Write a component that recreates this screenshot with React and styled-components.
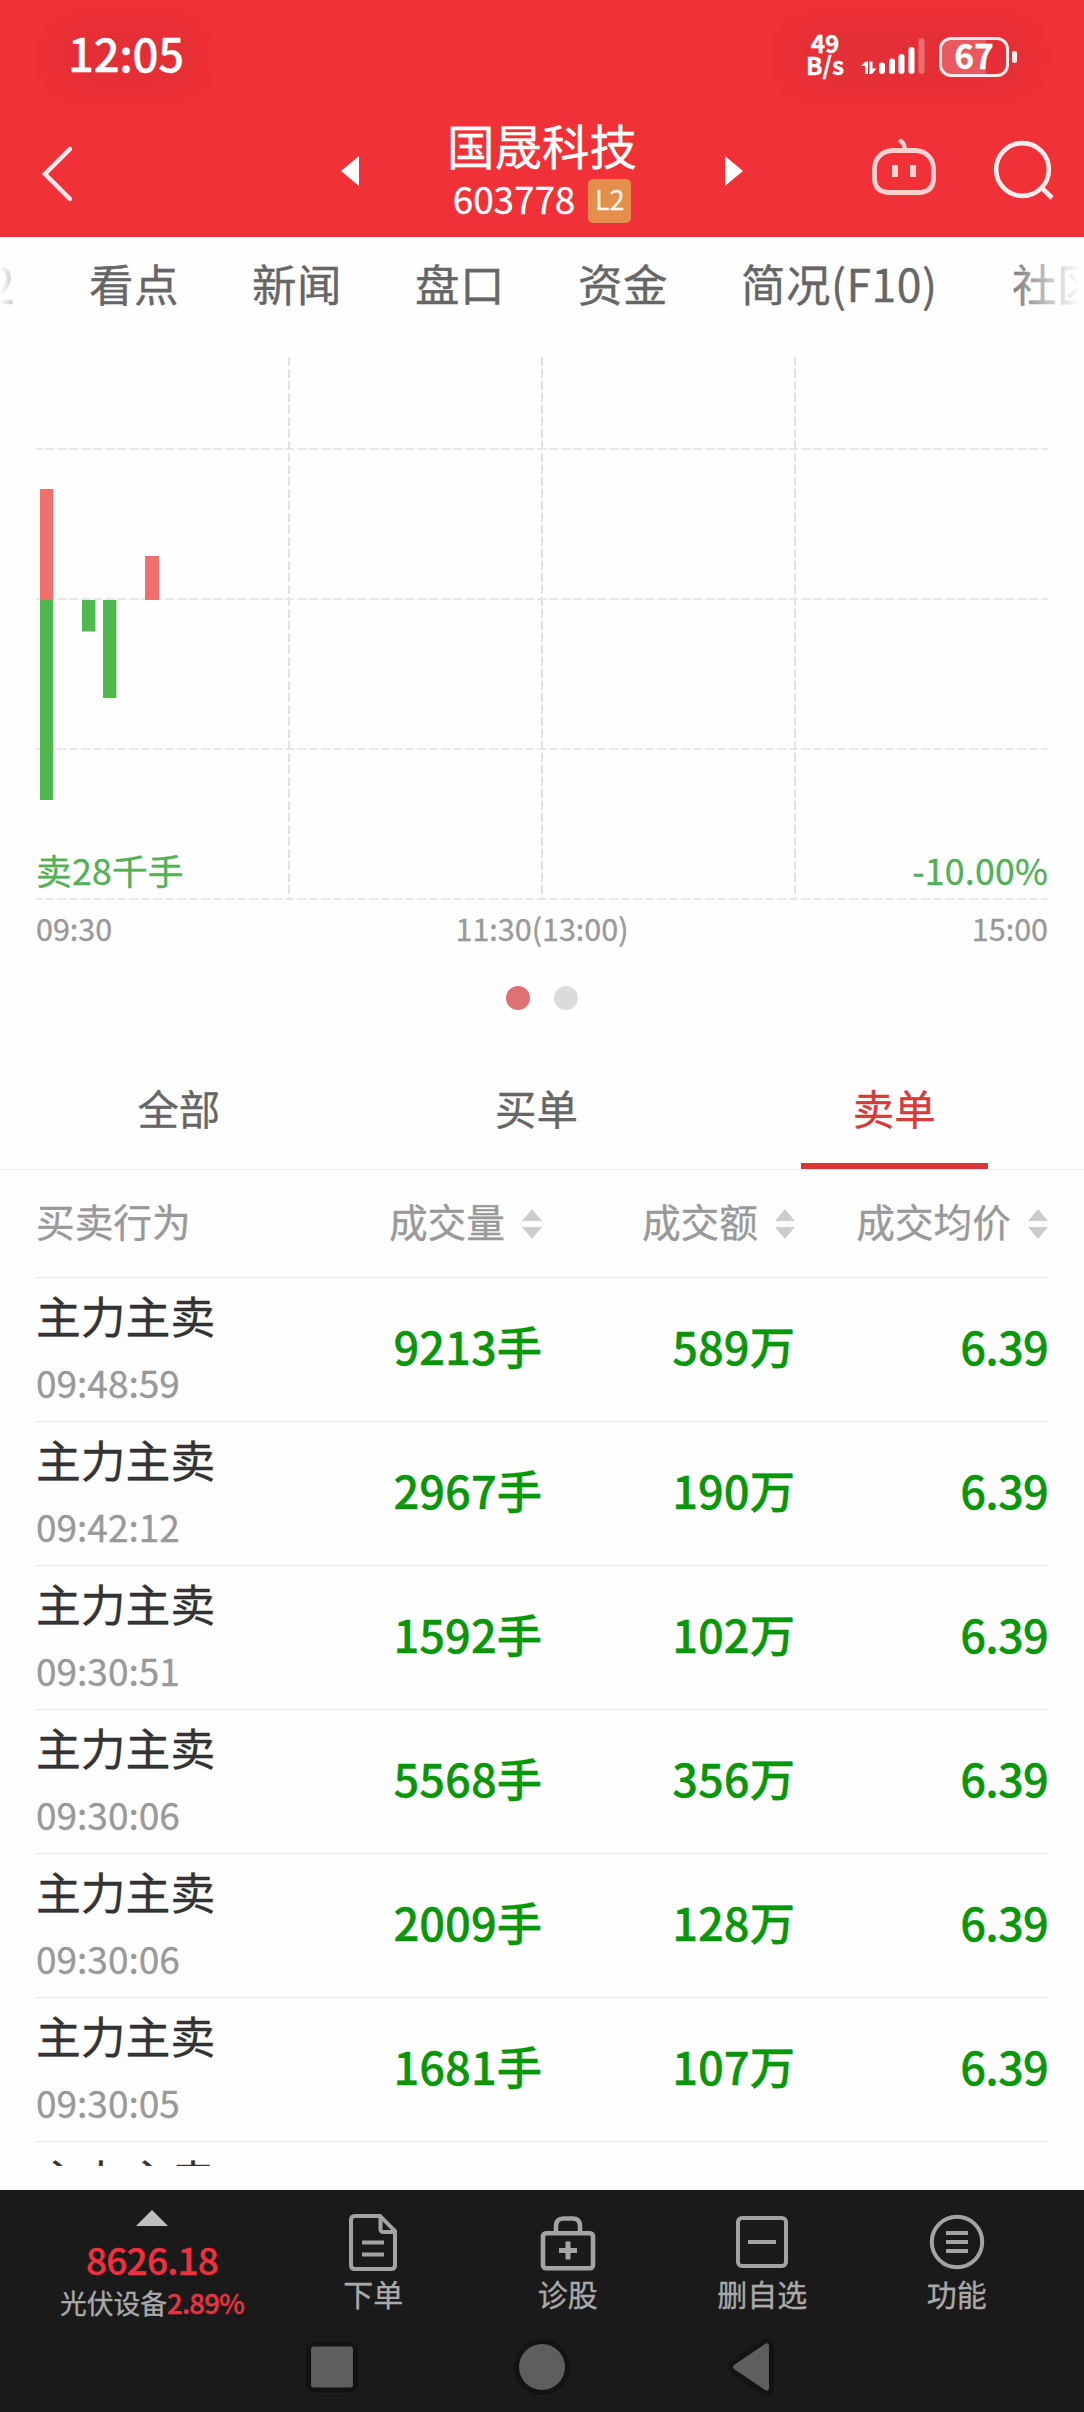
import React, { useState } from 'react';
import styled, { createGlobalStyle } from 'styled-components';

const GlobalStyle = createGlobalStyle`
  * {
    box-sizing: border-box;
  }
  body {
    margin: 0;
    background: #fff;
    font-family: 'Noto Sans CJK SC', 'Noto Sans', sans-serif;
    -webkit-text-stroke: 0.35px currentColor;
  }
`;

// Styled Components
const Page = styled.div`
  width: 1084px;
  height: 2412px;
  display: flex;
  flex-direction: column;
  overflow: hidden;
  background: #fefefe;
`;

const Header = styled.header`
  height: 237px;
  background: #f03137;
  color: #fff;
`;

const StatusBar = styled.div`
  height: 112px;
  display: flex;
  justify-content: space-between;
  padding: 36px 67px 0 68px;
`;

const Halo = styled.div`
  height: 42px;
  display: flex;
  align-items: center;
  border-radius: 20px;
  background: rgba(70, 35, 40, 0.07);
  box-shadow: 0 0 30px 14px rgba(70, 35, 40, 0.07);
`;

const Clock = styled.div`
  font-size: 45.5px;
  line-height: 33px;
  font-weight: 500;
  letter-spacing: -0.3px;
  padding-bottom: 9px;
`;

const NetSpeed = styled.div`
  width: 44px;
  margin-right: 14px;
  padding-bottom: 6px;
  text-align: center;
  font-size: 24.3px;
  line-height: 22px;
  font-weight: 700;
`;

const Battery = styled.div`
  width: 70px;
  height: 40px;
  margin-left: 14px;
  border: 3.5px solid #ffe9ea;
  border-radius: 12px;
  background: linear-gradient(90deg, #e9595e 0 44px, transparent 44px);
  font-size: 33.5px;
  line-height: 30px;
  font-weight: 700;
  text-align: center;
`;

const BatteryTip = styled.div`
  width: 5px;
  height: 12px;
  margin-left: 3px;
  border-radius: 2px;
  background: #ffe9ea;
`;

const NavBar = styled.div`
  display: flex;
  height: 125px;
  padding: 0 28px 0 40px;
`;

const BackIcon = styled.svg`
  width: 36px;
  height: 62px;
  margin-top: 31px;
`;

const TitleGroup = styled.div`
  display: flex;
  width: 402px;
  margin-left: 265px;
  justify-content: space-between;
`;

const ArrowIcon = styled.svg`
  width: 18px;
  height: 30px;
  margin-top: 44px;
`;

const TitleBlock = styled.div`
  display: flex;
  flex-direction: column;
  align-items: center;
`;

const StockName = styled.div`
  font-size: 47.5px;
  line-height: 66px;
  height: 62px;
`;

const StockCode = styled.div`
  display: flex;
  font-size: 36.8px;
  line-height: 48px;
`;

const LevelBadge = styled.span`
  width: 43px;
  height: 44px;
  margin: 5px 0 0 13px;
  border-radius: 5px;
  background: #e38e4a;
  color: #fff3e8;
  font-size: 27px;
  line-height: 40px;
  text-align: center;
`;

const HeaderIcons = styled.div`
  display: flex;
  gap: 53px;
  margin: 24px 0 0 127px;
`;

const TabStrip = styled.nav`
  position: relative;
  display: flex;
  gap: 74px;
  height: 92px;
  font-size: 44.5px;
  line-height: 92px;
  letter-spacing: 0.5px;
  color: #666;
  white-space: nowrap;
  overflow: hidden;

  &::after {
    content: '';
    position: absolute;
    inset: 0;
    background: linear-gradient(90deg, #fefefe 0, rgba(254, 254, 254, 0.6) 16px, transparent 60px, transparent 1000px, #fefefe 1080px);
  }
`;

const TopTab = styled.span`
  flex: none;
  width: ${props => props.$width || 89}px;
`;

const PartialTab = styled(TopTab)`
  width: 15px;
  font-size: 49px;
  letter-spacing: 0;
  direction: rtl;
`;

const ChartSection = styled.section`
  padding: 28px 36px 0;
`;

const Chart = styled.div`
  position: relative;
  height: 544px;
`;

const ChartSvg = styled.svg`
  display: block;
`;

const ChartLabel = styled.div`
  position: absolute;
  bottom: 0;
  ${props => props.$side}: 0;
  font-size: 35.7px;
  line-height: 62px;
  letter-spacing: 0.2px;
  color: #52b055;
`;

const Axis = styled.div`
  display: grid;
  grid-template-columns: 1fr auto 1fr;
  font-size: 30.5px;
  line-height: 54px;
  height: 53px;
  color: #999;

  span:last-child {
    text-align: right;
  }
`;

const Dots = styled.div`
  display: flex;
  justify-content: center;
  gap: 24px;
  margin-top: 32px;
`;

const Dot = styled.span`
  width: 24px;
  height: 24px;
  border-radius: 50%;
  background: ${props => (props.$active ? '#df7175' : '#dbdbdb')};
`;

const OrderTabs = styled.div`
  display: flex;
  flex: none;
  height: 122px;
  margin-top: 38px;
  padding-right: 11px;
  border-bottom: 1px solid #ebebeb;
`;

const OrderTab = styled.div`
  flex: 1;
  display: flex;
  flex-direction: column;
  align-items: center;
  justify-content: space-between;
  font-size: 41.4px;
  line-height: 115px;
  padding-top: 2px;
  color: ${props => (props.$active ? '#d83a3a' : '#666')};
  cursor: pointer;

  &::after {
    content: '';
    width: 187px;
    height: 6px;
    margin-top: -2px;
    background: ${props => (props.$active ? '#d93638' : 'transparent')};
  }
`;

const Table = styled.div`
  height: 996px;
  padding: 0 36px;
  overflow: hidden;
`;

const Row = styled.div`
  display: grid;
  grid-template-columns: repeat(4, 253px);
  height: 144px;
  border-bottom: 1px solid #ebebeb;
`;

const HeadRow = styled(Row)`
  height: 108px;
  font-size: 38.7px;
  line-height: 101px;
  color: #999;
`;

const HeadCell = styled.div`
  display: flex;
  justify-content: flex-end;
  white-space: nowrap;

  &:first-child {
    justify-content: flex-start;
  }
`;

const SortIcon = styled.svg`
  width: 20px;
  height: 30px;
  margin: 39px 0 0 17px;
  fill: #ccc;
`;

const Action = styled.div`
  font-size: 44.8px;
  line-height: 74px;
  height: 73px;
  color: #333;
`;

const Time = styled.div`
  font-size: 37px;
  line-height: 62px;
  color: #999;
`;

const Value = styled.div`
  font-size: 45.3px;
  line-height: 135px;
  font-weight: 500;
  text-align: right;
  color: #0a960a;
`;

const Price = styled(Value)`
  letter-spacing: -0.8px;
`;

const Footer = styled.footer`
  height: 222px;
  margin-top: 24px;
  background: #1a1a1a;
  color: #a9a9a9;
`;

const Toolbar = styled.div`
  display: flex;
  height: 130px;
  padding: 0 30px 0 28px;
`;

const IndexTicker = styled.div`
  width: 248px;
  display: flex;
  flex-direction: column;
  align-items: center;
  padding-top: 20px;
`;

const UpArrow = styled.svg`
  flex: none;
  width: 32px;
  height: 16px;
  fill: #bfbfbf;
`;

const IndexValue = styled.div`
  flex: none;
  margin-top: 7px;
  font-size: 37px;
  line-height: 52px;
  height: 49px;
  font-weight: 500;
  letter-spacing: -0.8px;
  color: #ee3040;
`;

const IndexName = styled.div`
  flex: none;
  font-size: 26.8px;
  line-height: 40px;
  white-space: nowrap;
`;

const IndexChange = styled.span`
  color: #e83442;
  font-size: 27.5px;
  font-weight: 500;
  letter-spacing: -0.8px;
`;

const Tool = styled.div`
  flex: 1;
  display: flex;
  flex-direction: column;
  align-items: center;
  padding-top: 22px;
  font-size: 30px;
  line-height: 42px;
`;

const ToolIcon = styled.svg`
  width: 60px;
  height: 60px;
  fill: none;
  stroke: #a3a3a3;
  stroke-width: 4;
`;

const SystemNav = styled.div`
  display: flex;
  justify-content: center;
  gap: 150px;
  padding-top: 17px;

  svg {
    width: 60px;
    height: 60px;
    fill: #5e5e5e;
    stroke: #131313;
    stroke-width: 10;
    paint-order: stroke;
    stroke-linejoin: round;
  }
`;

const topTabs = [
  { label: '看点' },
  { label: '新闻' },
  { label: '盘口' },
  { label: '资金' },
  { label: '简况(F10)', width: 197 },
  { label: '社区' },
];

const bars = [
  { x: 4, y: 132, width: 13.2, height: 111, color: '#f07070' },
  { x: 4, y: 243, width: 13.2, height: 200, color: '#4fb84f' },
  { x: 46, y: 243, width: 13.4, height: 31.5, color: '#4fb84f' },
  { x: 67, y: 243, width: 13.4, height: 98, color: '#4fb84f' },
  { x: 109, y: 199, width: 14, height: 44, color: '#f07070' },
];

const orderTabs = ['全部', '买单', '卖单'];
const columns = ['成交量', '成交额', '成交均价'];

const orders = [
  { time: '09:48:59', volume: '9213手', amount: '589万', price: '6.39' },
  { time: '09:42:12', volume: '2967手', amount: '190万', price: '6.39' },
  { time: '09:30:51', volume: '1592手', amount: '102万', price: '6.39' },
  { time: '09:30:06', volume: '5568手', amount: '356万', price: '6.39' },
  { time: '09:30:06', volume: '2009手', amount: '128万', price: '6.39' },
  { time: '09:30:05', volume: '1681手', amount: '107万', price: '6.39' },
];

const tools = [
  {
    label: '下单',
    icon: (
      <>
        <path d="M12 4H37L52 19V53Q52 57 48 57H12Q8 57 8 53V8Q8 4 12 4Z" />
        <path d="M37.5 4V17Q37.5 20 40.5 20H52M19 30.5H41M19 42.5H41" />
      </>
    ),
  },
  {
    label: '诊股',
    icon: (
      <>
        <rect x="5" y="21.2" width="50" height="35" rx="3" strokeWidth="4.6" />
        <path d="M18 21V14Q18 6.500 25.500 6.500H34.500Q42 6.500 42 14V21" strokeWidth="4.6" />
        <path d="M21 38.500H39M30 29.500V47.500" strokeWidth="5" />
      </>
    ),
  },
  {
    label: '删自选',
    icon: (
      <>
        <rect x="6" y="6" width="48" height="48" rx="4" />
        <path d="M16 30H44" />
      </>
    ),
  },
  {
    label: '功能',
    icon: (
      <>
        <circle cx="30" cy="30" r="25.2" />
        <path d="M19 21H41M19 30H41M19 39H41" />
      </>
    ),
  },
];

const FlowChart = () => (
  <Chart>
    <ChartSvg width="1012" height="544" viewBox="0 0 1012 544">
      <g stroke="#dfdfdf" strokeWidth="1.6" strokeDasharray="9 3">
        {[92, 242, 392, 542].map(y => <path key={y} d={`M-3 ${y}H1012`} />)}
      </g>
      <g stroke="#e2e2e2" strokeWidth="2" strokeDasharray="9 3">
        {[253, 506, 759].map(x => <path key={x} d={`M${x} 0V542`} />)}
      </g>
      {bars.map((bar, i) => (
        <rect key={i} x={bar.x} y={bar.y} width={bar.width} height={bar.height} fill={bar.color} />
      ))}
    </ChartSvg>
    <ChartLabel $side="left">卖28千手</ChartLabel>
    <ChartLabel $side="right">-10.00%</ChartLabel>
  </Chart>
);

const App = () => {
  const [activeTab, setActiveTab] = useState('卖单');

  return (
    <Page lang="zh-CN">
      <GlobalStyle />
      <Header>
        <StatusBar>
          <Halo>
            <Clock>12:05</Clock>
          </Halo>
          <Halo>
            <NetSpeed>
              <div>49</div>
              <div>B/s</div>
            </NetSpeed>
            <svg width="64" height="40" viewBox="0 0 64 40" fill="#fff">
              <path d="M0 29L4.500 24.500H7V37H4V29ZM8.500 24.500H11.500V31.500H15.500L11 37H8.500Z" />
              <rect x="18" y="25.5" width="6" height="11.500" rx="3" />
              <rect x="28" y="21.5" width="6" height="15.500" rx="3" />
              <rect x="37.5" y="17" width="6" height="20" rx="3" />
              <rect x="47.5" y="10" width="6" height="27" rx="3" />
              <rect x="57.5" y="1" width="6" height="36" rx="3" opacity="0.3" />
            </svg>
            <Battery>67</Battery>
            <BatteryTip />
          </Halo>
        </StatusBar>
        <NavBar>
          <BackIcon viewBox="0 0 36 62" fill="none" stroke="#ffe9ea" strokeWidth="4.5" strokeLinecap="round">
            <path d="M30 6L5 31L30 56" />
          </BackIcon>
          <TitleGroup>
            <ArrowIcon viewBox="0 0 18 30" fill="#fff"><path d="M18 0V30L0 15Z" /></ArrowIcon>
            <TitleBlock>
              <StockName>国晟科技</StockName>
              <StockCode>603778<LevelBadge>L2</LevelBadge></StockCode>
            </TitleBlock>
            <ArrowIcon viewBox="0 0 18 30" fill="#fff"><path d="M0 0L18 15L0 30Z" /></ArrowIcon>
          </TitleGroup>
          <HeaderIcons>
            <svg width="68" height="64" viewBox="0 0 68 64" fill="none" stroke="#ffd0d2" strokeWidth="4.8" strokeLinecap="round">
              <path d="M22 14.5H46C57 15.500 63.500 23 63.500 33V42Q63.500 56.500 48 56.500H20Q4.500 56.500 4.500 42V33C4.500 23 11 15.500 22 14.500Z" />
              <path d="M30.500 5Q34.500 7 35 14" strokeWidth="4.2" />
              <path d="M25 29V41M43 29V41" strokeWidth="6" strokeLinecap="butt" />
            </svg>
            <svg width="64" height="68" viewBox="0 0 64 68" fill="none" stroke="#ffeced" strokeWidth="4.6">
              <circle cx="31.500" cy="33.500" r="26.400" />
              <path d="M50 51L61 62" />
            </svg>
          </HeaderIcons>
        </NavBar>
      </Header>

      <TabStrip>
        <PartialTab>L2</PartialTab>
        {topTabs.map(tab => (
          <TopTab key={tab.label} $width={tab.width}>{tab.label}</TopTab>
        ))}
      </TabStrip>

      <ChartSection>
        <FlowChart />
        <Axis>
          <span>09:30</span>
          <span>11:30(13:00)</span>
          <span>15:00</span>
        </Axis>
        <Dots>
          <Dot $active />
          <Dot />
        </Dots>
      </ChartSection>

      <OrderTabs>
        {orderTabs.map(label => (
          <OrderTab key={label} $active={activeTab === label} onClick={() => setActiveTab(label)}>
            {label}
          </OrderTab>
        ))}
      </OrderTabs>

      <Table>
        <HeadRow>
          <HeadCell>买卖行为</HeadCell>
          {columns.map(label => (
            <HeadCell key={label}>
              {label}
              <SortIcon viewBox="0 0 20 30"><path d="M10 0L20 12H0ZM0 18H20L10 30Z" /></SortIcon>
            </HeadCell>
          ))}
        </HeadRow>
        {orders.map((order, i) => (
          <Row key={i}>
            <div>
              <Action>主力主卖</Action>
              <Time>{order.time}</Time>
            </div>
            <Value>{order.volume}</Value>
            <Value>{order.amount}</Value>
            <Price>{order.price}</Price>
          </Row>
        ))}
        <Row>
          <Action>主力主卖</Action>
        </Row>
      </Table>

      <Footer>
        <Toolbar>
          <IndexTicker>
            <UpArrow viewBox="0 0 32 16"><path d="M16 0L32 16H0Z" /></UpArrow>
            <IndexValue>8626.18</IndexValue>
            <IndexName>光伏设备<IndexChange>2.89%</IndexChange></IndexName>
          </IndexTicker>
          {tools.map(tool => (
            <Tool key={tool.label}>
              <ToolIcon viewBox="0 0 60 60">{tool.icon}</ToolIcon>
              {tool.label}
            </Tool>
          ))}
        </Toolbar>
        <SystemNav>
          <svg viewBox="0 0 60 60"><rect x="9" y="9.500" width="42" height="41" rx="3" /></svg>
          <svg viewBox="0 0 60 60"><circle cx="30" cy="30" r="23" /></svg>
          <svg viewBox="0 0 60 60"><path d="M12 28L43 7Q47 5 47 9V51Q47 55 43 53L12 32Q10 30 12 28Z" /></svg>
        </SystemNav>
      </Footer>
    </Page>
  );
};

export default App;
